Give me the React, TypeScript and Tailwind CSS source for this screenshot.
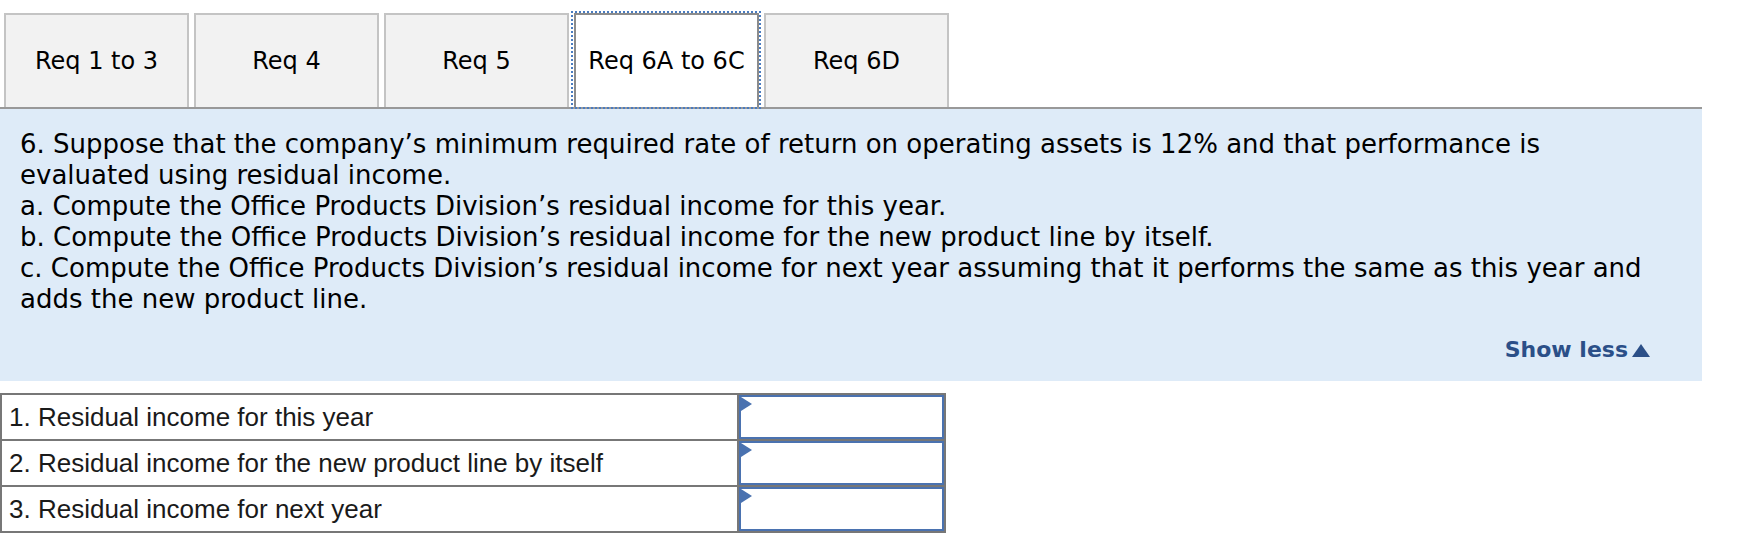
import React from "react";

const tabs = ["Req 1 to 3", "Req 4", "Req 5", "Req 6A to 6C", "Req 6D"];
const rows = [
  "1. Residual income for this year",
  "2. Residual income for the new product line by itself",
  "3. Residual income for next year",
];

export default function App() {
  return (
    <div className="w-[1750px] h-[550px] bg-white overflow-hidden">
      <div className="flex gap-[5px] pl-[4px] pt-[13px]" style={{ fontFamily: '"DejaVu Sans", Verdana, sans-serif' }}>
        {tabs.map((t, i) =>
          i === 3 ? (
            <div
              key={t}
              className="relative w-[185px] h-[94px] bg-white border-2 border-b-0 border-[#8c8c8c] flex items-center justify-center text-[24px] text-black"
            >
              <span className="absolute -left-[5px] -right-[4px] -top-[4px] -bottom-[2px] border-2 border-dotted border-[#4a7cc0] z-10" />
              {t}
            </div>
          ) : (
            <div
              key={t}
              className="w-[185px] h-[94px] bg-[#f2f2f2] border-2 border-b-0 border-[#c4c4c4] flex items-center justify-center text-[24px] text-black"
            >
              {t}
            </div>
          )
        )}
      </div>
      <div
        className="w-[1702px] bg-[#deebf8] border-t-2 border-[#999999] pt-[20px] pb-[15px] pl-[20px] pr-[42px] text-black"
        style={{ fontFamily: '"DejaVu Sans", Verdana, sans-serif' }}
      >
        <div className="text-[26px] leading-[31px]">
          <p>
            6. Suppose that the company’s minimum required rate of return on operating assets is 12% and that performance is
            evaluated using residual income.
          </p>
          <p>a. Compute the Office Products Division’s residual income for this year.</p>
          <p>b. Compute the Office Products Division’s residual income for the new product line by itself.</p>
          <p>
            c. Compute the Office Products Division’s residual income for next year assuming that it performs the same as this
            year and adds the new product line.
          </p>
        </div>
        <div className="flex justify-end pr-[10px] mt-[20px]">
          <span className="flex items-center gap-[4px] text-[22px] leading-[30.5px] font-bold text-[#2b4f88]">
            Show less
            <svg width="18" height="13" viewBox="0 0 18 13" className="mt-[1px]">
              <polygon points="9,0 18,13 0,13" fill="#2b4f88" />
            </svg>
          </span>
        </div>
      </div>
      <div
        className="mt-[12px] w-[946px] border-2 border-[#777777]"
        style={{ fontFamily: '"Liberation Sans", Arial, sans-serif' }}
      >
        {rows.map((r, i) => (
          <div key={r} className={i > 0 ? "flex h-[46px] border-t-2 border-[#777777]" : "flex h-[44px]"}>
            <div className="w-[737px] border-r-2 border-[#777777] pl-[7px] pt-[2px] flex items-center text-[26px] text-[#1a1a1a]">
              {r}
            </div>
            <div className="relative flex-1 border-2 border-[#4a72b0] bg-white">
              <svg className="absolute left-0 top-0" width="11" height="14" viewBox="0 0 11 14">
                <polygon points="0,0 11,7 0,14" fill="#4a72b0" />
              </svg>
            </div>
          </div>
        ))}
      </div>
    </div>
  );
}
